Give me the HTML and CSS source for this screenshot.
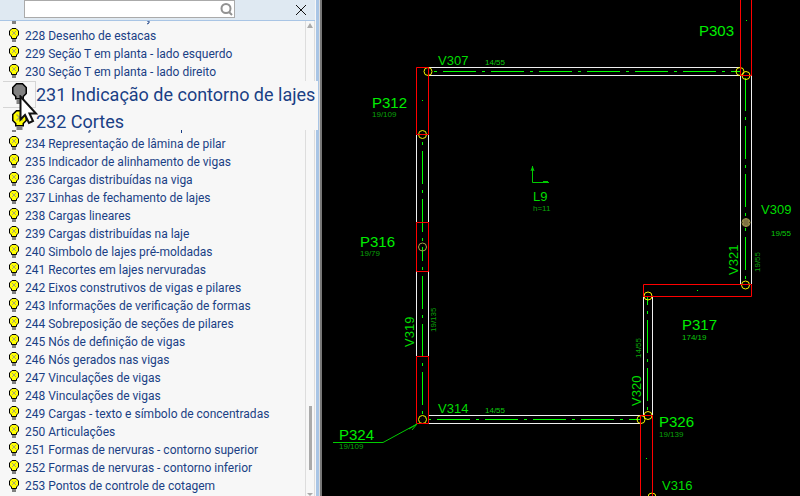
FILE: index.html
```
<!DOCTYPE html>
<html lang="pt-BR">
<head>
<meta charset="utf-8">
<title>Níveis de desenho</title>
<link rel="stylesheet" href="styles.css">
</head>
<body>
<svg class="defs" aria-hidden="true">
  <symbol id="bulb" viewBox="0 0 10 14">
    <path class="bulb-glass" d="M3 .5H7L9.5 3V7L7.5 9V10.5H2.500V9L.5 7V3Z"/>
    <path class="bulb-cross" d="M3 3l4 4M7 3l-4 4"/>
    <path class="bulb-base" d="M3 11h4v3H3z"/>
  </symbol>
</svg>
<div class="app">
  <aside class="panel">
    <header class="bar">
      <label class="search">
        <input type="text" aria-label="Pesquisar">
        <svg class="lens" viewBox="0 0 13 13" aria-hidden="true"><circle cx="6" cy="5.500" r="4.500"/><path d="M9 9l3 3"/></svg>
      </label>
      <button class="close" type="button" aria-label="Fechar"><svg viewBox="0 0 12 12" aria-hidden="true"><path d="M1 1l10 10M11 1L1 11"/></svg></button>
    </header>
    <div class="body">
      <ul class="levels">
        <li class="first"><svg class="bulb"><use href="#bulb"/></svg><svg class="hint" viewBox="0 0 200 18"><path d="M122 12h2v2l-2 1"/></svg></li>
        <li><svg class="bulb"><use href="#bulb"/></svg>228 Desenho de estacas</li>
        <li><svg class="bulb"><use href="#bulb"/></svg>229 Seção T em planta - lado esquerdo</li>
        <li><svg class="bulb"><use href="#bulb"/></svg>230 Seção T em planta - lado direito</li>
        <li></li>
        <li></li>
        <li><svg class="bulb"><use href="#bulb"/></svg><svg class="hint" viewBox="0 0 200 18"><path d="M64 13h1v2l-2 0M156.500 13v3"/></svg></li>
        <li><svg class="bulb"><use href="#bulb"/></svg>234 Representação de lâmina de pilar</li>
        <li><svg class="bulb"><use href="#bulb"/></svg>235 Indicador de alinhamento de vigas</li>
        <li><svg class="bulb"><use href="#bulb"/></svg>236 Cargas distribuídas na viga</li>
        <li><svg class="bulb"><use href="#bulb"/></svg>237 Linhas de fechamento de lajes</li>
        <li><svg class="bulb"><use href="#bulb"/></svg>238 Cargas lineares</li>
        <li><svg class="bulb"><use href="#bulb"/></svg>239 Cargas distribuídas na laje</li>
        <li><svg class="bulb"><use href="#bulb"/></svg>240 Simbolo de lajes pré-moldadas</li>
        <li><svg class="bulb"><use href="#bulb"/></svg>241 Recortes em lajes nervuradas</li>
        <li><svg class="bulb"><use href="#bulb"/></svg>242 Eixos construtivos de vigas e pilares</li>
        <li><svg class="bulb"><use href="#bulb"/></svg>243 Informações de verificação de formas</li>
        <li><svg class="bulb"><use href="#bulb"/></svg>244 Sobreposição de seções de pilares</li>
        <li><svg class="bulb"><use href="#bulb"/></svg>245 Nós de definição de vigas</li>
        <li><svg class="bulb"><use href="#bulb"/></svg>246 Nós gerados nas vigas</li>
        <li><svg class="bulb"><use href="#bulb"/></svg>247 Vinculações de vigas</li>
        <li><svg class="bulb"><use href="#bulb"/></svg>248 Vinculações de vigas</li>
        <li><svg class="bulb"><use href="#bulb"/></svg>249 Cargas - texto e símbolo de concentradas</li>
        <li><svg class="bulb"><use href="#bulb"/></svg>250 Articulações</li>
        <li><svg class="bulb"><use href="#bulb"/></svg>251 Formas de nervuras - contorno superior</li>
        <li><svg class="bulb"><use href="#bulb"/></svg>252 Formas de nervuras - contorno inferior</li>
        <li><svg class="bulb"><use href="#bulb"/></svg>253 Pontos de controle de cotagem</li>
      </ul>
      <div class="track"><i class="up"></i><i class="thumb"></i><i class="down"></i></div>
    </div>
    <div class="callout">
      <div class="big"><span class="cell"><svg class="bulb off"><use href="#bulb"/></svg></span>231 Indicação de contorno de lajes</div>
      <div class="big"><span class="cell plain"><svg class="bulb"><use href="#bulb"/></svg></span>232 Cortes</div>
      <svg class="cursor" viewBox="0 0 19 30" aria-hidden="true"><path d="M1.500 1.500V24.500L6 20L10 28L14 26L10.500 18.500H17Z"/></svg>
    </div>
  </aside>
  <main class="canvas">
    <svg class="plan" viewBox="322 0 478 496" preserveAspectRatio="xMinYMin slice" role="img" aria-label="Planta de formas">
      <g class="wall">
        <path d="M428.500 67.500H740.500M428.500 75.500H740.500M416.500 135V222M428.500 135V222M416.500 271V356M428.500 271V356M428.500 415.500H641M428.500 423.500H641M740.500 75V284M751.500 75V284M643.500 297V415M652.500 297V415"/>
      </g>
      <g class="axis">
        <path d="M434 71.500H740" stroke-dasharray="3 6 33 6"/>
        <path d="M422.500 142V241" stroke-dasharray="3 6 33 6"/>
        <path d="M422.500 247V261M422.500 267V270"/>
        <path d="M422.500 276V419" stroke-dasharray="33 6 3 6"/>
        <path d="M428 419.500H641" stroke-dasharray="3 6 33 6"/>
        <path d="M745.500 78V216" stroke-dasharray="33 6 3 6"/>
        <path d="M745.500 228V284" stroke-dasharray="3 6 33 6"/>
        <path d="M647.500 297V415" stroke-dasharray="8 6 3 6 33 6 3 6 33 6 3 6"/>
        <path d="M422 100.500h1M746 20.500h1M697 290.500h1M646 458.500h1"/>
      </g>
      <g class="node">
        <circle cx="428" cy="71.500" r="4"/><circle cx="422.500" cy="134.500" r="4"/>
        <circle cx="740" cy="71.500" r="4"/><circle cx="746" cy="75.500" r="4"/>
        <circle cx="745.500" cy="285" r="4"/><circle cx="648" cy="296" r="4"/>
        <circle cx="648" cy="415.500" r="4"/><circle cx="641" cy="419.500" r="4"/>
        <circle cx="422.500" cy="419.500" r="4"/><circle cx="652" cy="497" r="4"/>
        <circle class="dull" cx="422.500" cy="247" r="4"/><circle class="dull" cx="746" cy="222.500" r="4"/>
        <path class="core" d="M743.500 219.500h5v6h-5z"/>
      </g>
      <g class="pillar">
        <path d="M416.500 67.500h12v67h-12zM416.500 222.500h12v49h-12zM416.500 356.500h12v67h-12zM643.500 284.500h108v12h-108zM740.500 0V75.500H751.500V0M640.500 496V415.500H652.500V496"/>
      </g>
      <g class="mark">
        <path d="M532.500 166V182.500H549M531 171l1.500-4l1.500 4M543 181.500h5M333 442.500H383L417 424M409 429l8-5l-5 6"/>
      </g>
      <g class="pl">
        <text x="372" y="108">P312</text><text x="360" y="247">P316</text><text x="339" y="440">P324</text>
        <text x="699" y="36">P303</text><text x="682" y="330">P317</text><text x="659" y="427">P326</text>
      </g>
      <g class="vg">
        <text x="438" y="65">V307</text><text x="438" y="413">V314</text><text x="761" y="214">V309</text>
        <text x="662" y="490">V316</text><text x="533" y="201">L9</text>
        <text transform="translate(414 347) rotate(-90)">V319</text>
        <text transform="translate(738 275) rotate(-90)">V321</text>
        <text transform="translate(641 406) rotate(-90)">V320</text>
      </g>
      <g class="dim">
        <text class="lit" x="485" y="65">14/55</text><text class="lit" x="485" y="413">14/55</text>
        <text x="372" y="117">19/109</text><text x="360" y="256">19/79</text><text x="339" y="449">19/109</text>
        <text class="lit" x="771" y="236">19/55</text><text class="lit" x="682" y="340">174/19</text><text x="659" y="437">19/139</text>
        <text x="533" y="211">h=11</text>
        <text transform="translate(436 332) rotate(-90)">19/135</text>
        <text transform="translate(760 272) rotate(-90)">19/55</text>
        <text transform="translate(641 358) rotate(-90)">14/55</text>
      </g>
    </svg>
  </main>
</div>
</body>
</html>
```
FILE: styles.css
```
* { box-sizing: border-box; }
body { margin: 0; background: #000; }
.defs { position: absolute; width: 0; height: 0; }
.app { display: flex; height: 100vh; overflow: hidden; }

.panel {
  position: relative;
  display: flex;
  flex-direction: column;
  flex: 0 0 322px;
  border-right: 2px solid #777;
  box-shadow: inset -1px 0 #dcdcdc, inset -4px 0 #a9c5e5;
  padding-right: 5px;
  background: #f7f7f7;
  color: #1a3f85;
  font: 12px/18px Roboto, "Open Sans", sans-serif;
}
.bar {
  display: flex;
  align-items: flex-start;
  justify-content: space-between;
  height: 21px;
  padding: 0 8px 0 24px;
  border-bottom: 1px solid #a9c5e5;
  background: #dfe9f2;
}
.search {
  display: flex;
  align-items: center;
  width: 211px;
  height: 18px;
  padding-right: 1px;
  border: 1px solid #aaa;
  background: #fff;
}
.search input { flex: 1; min-width: 0; height: 14px; border: 0; outline: 0; background: none; }
.lens { width: 13px; height: 13px; fill: none; stroke: #929292; stroke-width: 2; }
.close { width: 12px; height: 20px; padding: 0; border: 0; background: none; }
.close svg { display: block; width: 12px; height: 12px; fill: none; stroke: #111; stroke-width: 1; }

.body { display: flex; flex: 1; min-height: 0; }
.levels {
  display: flex;
  flex: 1;
  flex-direction: column;
  min-width: 0;
  margin: 0;
  padding: 0 0 0 9px;
  overflow: hidden;
  list-style: none;
}
.levels li { display: flex; flex: 0 0 18px; height: 18px; white-space: nowrap; }
.levels .first { margin-top: -12px; }
.bulb { flex: none; width: 10px; height: 14px; margin: 1px 6px 0 0; }
.bulb-glass { fill: var(--glass, #ff0); stroke: #000; stroke-width: 1; }
.bulb-cross { fill: none; stroke: var(--glass, #aaa86a); stroke-width: 1; }
.bulb-base { fill: #808080; }
.off { --glass: #808080; }
.hint { width: 200px; height: 18px; fill: none; stroke: #1a3f85; stroke-width: 1; }

.track {
  display: flex;
  flex: 0 0 10px;
  flex-direction: column;
  align-items: center;
  justify-content: space-between;
  border: solid #ddd;
  border-width: 0 1px;
}
.up, .down { border: 3px solid transparent; }
.up { border-top: 0; border-bottom: 5px solid #aaa; margin-top: 2px; }
.down { border-bottom: 0; border-top: 3px solid #aaa; }
.thumb { width: 3px; height: 64px; margin-top: auto; margin-bottom: 23px; background: #aaa; }

.callout {
  position: absolute;
  top: 81px;
  left: 3px;
  width: 315px;
  height: 49px;
  overflow: hidden;
  background: #f7f7f7;
  font-size: 18px;
  line-height: 28px;
}
.big { display: flex; height: 27px; white-space: nowrap; }
.cell {
  flex: none;
  width: 33px;
  height: 27px;
  padding-left: 9px;
  border: solid #d5d5d5;
  border-width: 1px 1px 1px 0;
}
.plain { border-color: transparent; }
.cell .bulb { display: block; width: 15px; height: 21px; margin: 1px 0 0; }
.cursor { position: absolute; left: 16px; top: 14px; width: 19px; height: 30px; fill: #fff; stroke: #111; stroke-width: 2; }

.canvas { flex: 1; min-width: 0; background: #000; }
.plan { display: block; width: 100%; height: 100%; font-family: "Liberation Sans", Arial, sans-serif; }
.wall, .axis, .node, .pillar, .mark { fill: none; stroke-width: 1; }
.wall { stroke: #eee; }
.axis { stroke: #0f0; }
.node { stroke: #f5f500; }
.pillar { stroke: #f00; }
.mark { stroke: #0c0; }
.dull { stroke: #aaa04c; }
.core { fill: #7c7040; stroke: #8d8048; }
.pl { fill: #0e0; font-size: 15px; }
.vg { fill: #0d0; font-size: 13px; }
.dim { fill: #0aa00a; font-size: 8px; }
.lit { fill: #0cc80c; }
```
